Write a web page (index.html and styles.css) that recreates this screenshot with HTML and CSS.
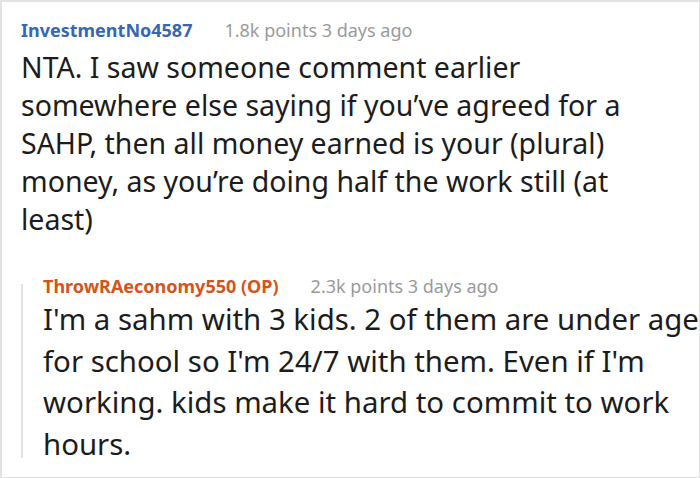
FILE: index.html
```html
<!DOCTYPE html>
<html>
<head>
<meta charset="utf-8">
<link rel="stylesheet" href="styles.css">
</head>
<body>
<div class="frame">
  <div class="comment">
    <div class="meta">
      <span class="author">InvestmentNo4587</span>
      <span class="info">1.8k points 3 days ago</span>
    </div>
    <div class="body">NTA. I saw someone comment earlier somewhere else saying if you’ve agreed for a SAHP, then all money earned is your (plural) money, as you’re doing half the work still (at least)</div>
    <div class="reply">
      <div class="thread-line"></div>
      <div class="reply-content">
        <div class="meta">
          <span class="author op">ThrowRAeconomy550 (OP)</span>
          <span class="info">2.3k points 3 days ago</span>
        </div>
        <div class="body reply-body">I'm a sahm with 3 kids. 2 of them are under age for school so I'm 24/7 with them. Even if I'm working. kids make it hard to commit to work hours.</div>
      </div>
    </div>
  </div>
</div>
</body>
</html>
```
FILE: styles.css
```css
html, body {
  margin: 0;
  padding: 0;
  background: #fff;
}
.frame {
  width: 700px;
  height: 478px;
  box-sizing: border-box;
  border-style: solid;
  border-color: #e2e2e2;
  border-width: 2px 1px 1px 2px;
  overflow: hidden;
  font-family: "Noto Sans", "Open Sans", sans-serif;
  color: #1c1c1c;
}
.comment {
  padding: 15px 0 0 19px;
}
.meta {
  display: flex;
  gap: 32px;
  font-size: 18px;
  line-height: 26px;
  white-space: nowrap;
}
.author {
  font-weight: 700;
  color: #3567b3;
}
.author.op {
  color: #d4541c;
}
.info {
  color: #9a9a9a;
}
.body {
  font-size: 28.5px;
  line-height: 38px;
  margin-top: 5px;
  padding-right: 35px;
}
.reply {
  display: flex;
  gap: 20px;
  margin-top: 35px;
}
.thread-line {
  flex: 0 0 2px;
  background: #e2e2e2;
  margin: 11px 0 7px;
}
.reply-content {
  flex: 1;
  min-width: 0;
}
.reply-body {
  font-size: 29.4px;
  line-height: 41.5px;
  margin-top: 0;
  padding-right: 0;
  margin-right: -8px;
}
```
